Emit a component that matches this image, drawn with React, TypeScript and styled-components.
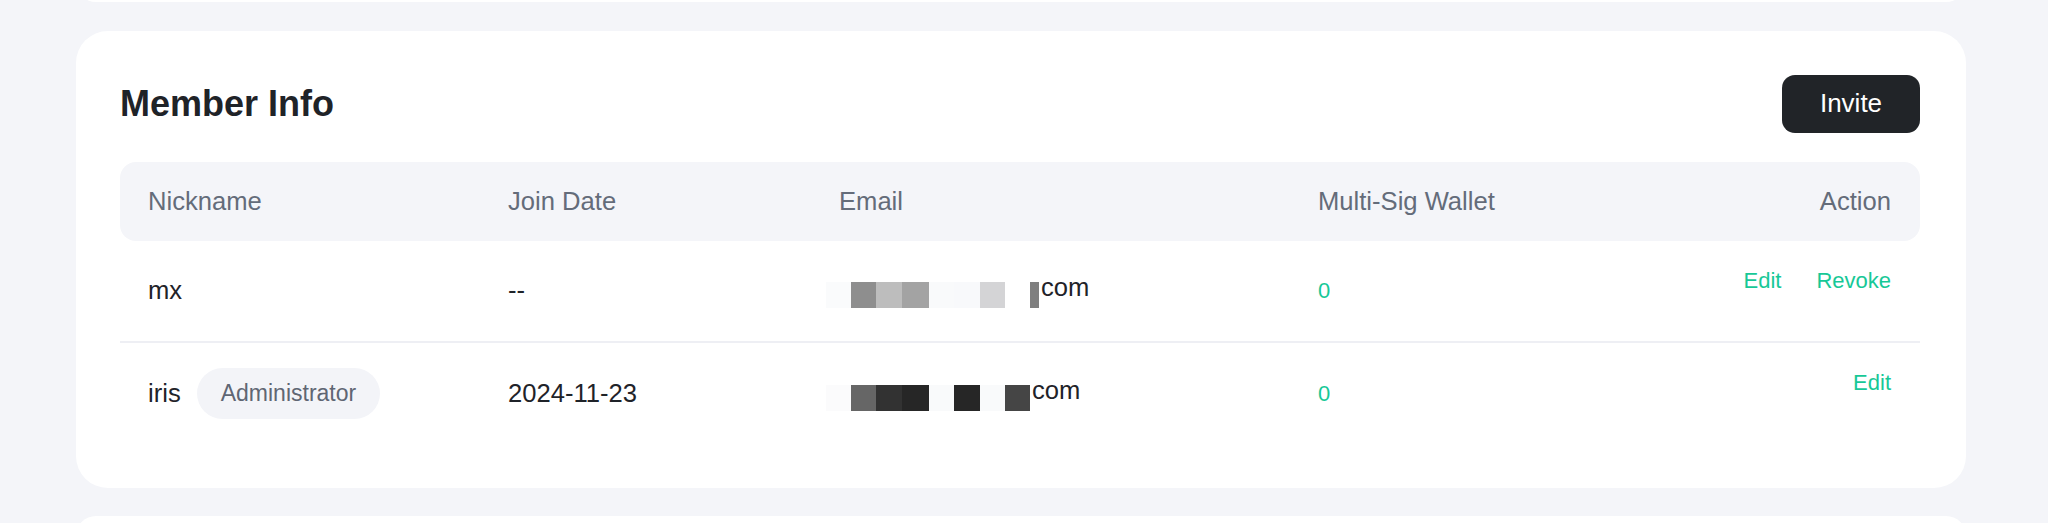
import styled, { createGlobalStyle } from "styled-components";

type Member = {
  nickname: string;
  role?: string;
  joinDate: string;
  mosaic: [string, number][];
  multiSig: string;
  actions: string[];
};

const members: Member[] = [
  {
    nickname: "mx",
    joinDate: "--",
    mosaic: [
      ["#fafbfc", 25],
      ["#8e8e8e", 25],
      ["#bdbdbd", 26],
      ["#a3a3a3", 27],
      ["#f9fafb", 25],
      ["#f8f9fb", 26],
      ["#d4d4d6", 25],
      ["#ffffff", 25],
      ["#7f7f7f", 9],
    ],
    multiSig: "0",
    actions: ["Edit", "Revoke"],
  },
  {
    nickname: "iris",
    role: "Administrator",
    joinDate: "2024-11-23",
    mosaic: [
      ["#fbfbfc", 25],
      ["#666666", 25],
      ["#323232", 26],
      ["#262626", 27],
      ["#f9fafb", 25],
      ["#262626", 26],
      ["#f9fafb", 25],
      ["#454545", 25],
    ],
    multiSig: "0",
    actions: ["Edit"],
  },
];

const App = () => {
  return (
    <Page>
      <GlobalStyle />
      <StubCard />
      <Card>
        <CardHeader>
          <Title>Member Info</Title>
          <InviteButton>Invite</InviteButton>
        </CardHeader>
        <Table>
          <HeaderRow>
            <HeadCell>Nickname</HeadCell>
            <HeadCell>Join Date</HeadCell>
            <HeadCell>Email</HeadCell>
            <HeadCell>Multi-Sig Wallet</HeadCell>
            <HeadCell>Action</HeadCell>
          </HeaderRow>
          {members.map((m, i) => (
            <Row key={m.nickname} $last={i === members.length - 1}>
              <NameCell>
                {m.nickname}
                {m.role && <RoleBadge>{m.role}</RoleBadge>}
              </NameCell>
              <Cell>{m.joinDate}</Cell>
              <EmailCell>
                <Mosaic>
                  {m.mosaic.map(([color, w], j) => (
                    <MosaicBlock key={j} $color={color} $w={w} />
                  ))}
                </Mosaic>
                com
              </EmailCell>
              <CountCell>{m.multiSig}</CountCell>
              <ActionCell>
                {m.actions.map((a) => (
                  <ActionLink key={a}>{a}</ActionLink>
                ))}
              </ActionCell>
            </Row>
          ))}
        </Table>
      </Card>
      <StubCard />
    </Page>
  );
};

const GlobalStyle = createGlobalStyle`
  html, body {
    margin: 0;
    padding: 0;
    overflow: hidden;
    background: #f4f5f9;
    font-family: "Liberation Sans", Arial, sans-serif;
    color: #1f2329;
  }
  * {
    box-sizing: border-box;
  }
`;

const Page = styled.div`
  display: flex;
  flex-direction: column;
  gap: 28.8px;
  margin-top: -38px;
  padding: 0 82px 0 76px;
`;

const StubCard = styled.div`
  height: 40px;
  flex-shrink: 0;
  background: #ffffff;
  border-radius: 32px;
`;

const Card = styled.section`
  background: #ffffff;
  border-radius: 32px;
  padding: 44px 46px 43px 44px;
`;

const CardHeader = styled.div`
  display: flex;
  justify-content: space-between;
  align-items: center;
  height: 58px;
  margin-bottom: 28.8px;
`;

const Title = styled.h2`
  margin: 0;
  font-size: 36px;
  font-weight: 600;
  color: #1f2328;
`;

const InviteButton = styled.button`
  height: 58px;
  width: 138px;
  border: none;
  border-radius: 13px;
  background: #212428;
  color: #ffffff;
  font-family: inherit;
  font-size: 26px;
  cursor: pointer;
`;

const Table = styled.div`
  display: flex;
  flex-direction: column;
`;

const gridCols = `
  display: grid;
  grid-template-columns: 360px 331px 479px 1fr auto;
  padding: 0 29px 0 28px;
`;

const HeaderRow = styled.div`
  ${gridCols};
  align-items: center;
  height: 79px;
  background: #f4f5f9;
  border-radius: 16px;
`;

const HeadCell = styled.div`
  font-size: 25.6px;
  color: #646c7a;
`;

const Row = styled.div<{ $last: boolean }>`
  ${gridCols};
  align-items: center;
  height: 102px;
  border-bottom: ${(p) => (p.$last ? "none" : "2px solid #eeeff4")};
`;

const Cell = styled.div`
  font-size: 25.6px;
  color: #1f2329;
`;

const NameCell = styled(Cell)`
  display: flex;
  align-items: center;
  gap: 16px;
`;

const RoleBadge = styled.span`
  display: inline-flex;
  align-items: center;
  height: 51px;
  padding: 0 24px;
  border-radius: 26px;
  background: #f3f4f8;
  color: #5f6673;
  font-size: 23px;
`;

const EmailCell = styled(Cell)`
  margin-left: -13px;
  white-space: nowrap;
`;

const Mosaic = styled.span`
  display: inline-flex;
  vertical-align: -12px;
  margin-right: 2px;
`;

const MosaicBlock = styled.span<{ $color: string; $w: number }>`
  display: block;
  width: ${(p) => p.$w}px;
  height: 26px;
  background: ${(p) => p.$color};
`;

const CountCell = styled.div`
  font-size: 22px;
  color: #17c897;
`;

const ActionCell = styled.div`
  align-self: start;
  display: flex;
  justify-content: flex-end;
  gap: 35px;
  padding-top: 27px;
`;

const ActionLink = styled.a`
  font-size: 22px;
  color: #17c897;
  cursor: pointer;
`;

export default App;
